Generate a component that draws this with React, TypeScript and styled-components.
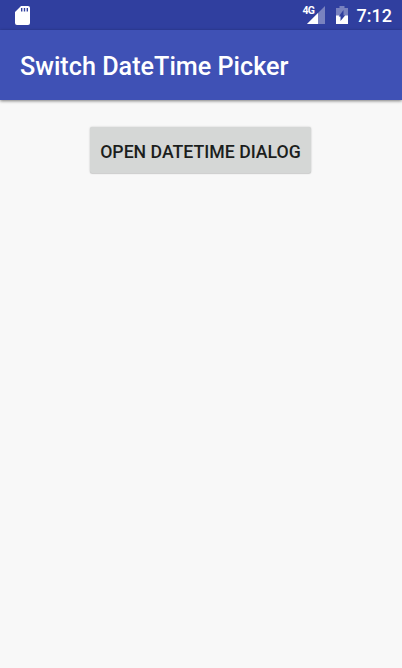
import React from 'react';
import styled, { createGlobalStyle } from 'styled-components';

const Global = createGlobalStyle`
  * { box-sizing: border-box; }
  body { margin: 0; background: #f8f8f8; font-family: Roboto, sans-serif; }
`;
const Screen = styled.div`
  display: flex; flex-direction: column; width: 402px; height: 668px; overflow: hidden; background: #f8f8f8;
`;
const StatusBar = styled.header`
  display: flex; align-items: center; justify-content: space-between;
  height: 30px; flex: none; padding: 0 10px 0 15px; background: #303f9f; color: #fff;
`;
const StatusGroup = styled.div`
  display: flex; align-items: center;
`;
const Clock = styled.span`
  margin-left: 9px; padding-top: 2px; font-size: 18px; font-weight: 500; line-height: 30px;
`;
const Network = styled.div`
  position: relative; display: flex; width: 18px; height: 18px;
`;
const NetworkLabel = styled.span`
  position: absolute; left: -4px; top: -1px;
  font-size: 10.5px; font-weight: 700; line-height: 11px; letter-spacing: -0.9px;
`;
const BatteryIcon = styled.svg`
  margin-left: 11px;
`;
const CardIcon = styled.svg`
  margin-top: 1px;
`;
const AppBar = styled.div`
  display: flex; align-items: center; height: 70px; flex: none; padding: 3px 20px 0;
  background: #3f51b5; color: #fff; box-shadow: 0 1px 3px rgba(0,0,0,.5);
`;
const Title = styled.h1`
  margin: 0; font-size: 25.2px; font-weight: 500; line-height: 30px; white-space: nowrap;
`;
const Content = styled.main`
  display: flex; justify-content: center; align-items: flex-start; padding: 27px 1px 0 0;
`;
const DialogButton = styled.button`
  width: 221px; height: 46px; padding: 3px 0 0; border: 0; border-radius: 2px; background: #d5d7d6;
  color: #1c1e1d; font: 500 17.7px/20px Roboto, sans-serif; white-space: nowrap;
  box-shadow: 0 0 2px rgba(0,0,0,.22), 0 1px 1px rgba(0,0,0,.12);
`;

export default function App() {
  return (
    <Screen>
      <Global />
      <StatusBar>
        <CardIcon width="15" height="19" viewBox="0 0 15 19" aria-label="SD card">
          <path fill="#fff" fillRule="evenodd" d="M6 0h7a2 2 0 0 1 2 2v15a2 2 0 0 1-2 2H2a2 2 0 0 1-2-2V6zM6 2v3.5h1.4V2zM8.8 2v3.5h1.4V2zM11.6 2v3.5H13V2z" />
        </CardIcon>
        <StatusGroup>
          <Network>
            <svg width="18" height="18" viewBox="0 0 18 18" aria-label="Signal">
              <path fill="#7982bf" d="M18 0v18H0L11 7z" />
              <path fill="#fff" d="M11 7v11H0z" />
            </svg>
            <NetworkLabel>4G</NetworkLabel>
          </Network>
          <BatteryIcon width="12" height="18" viewBox="0 0 12 18" aria-label="Battery charging">
            <path fill="#7982bf" d="M3.5 0h5v2H12v8H0V2h3.5z" />
            <path fill="#fff" d="M0 9.5h12V18H0z" />
            <path fill="#303f9f" d="M7.5 4v5.3h1.8L4.5 15v-4.5H2.7z" />
          </BatteryIcon>
          <Clock>7:12</Clock>
        </StatusGroup>
      </StatusBar>
      <AppBar><Title>Switch DateTime Picker</Title></AppBar>
      <Content><DialogButton type="button">OPEN DATETIME DIALOG</DialogButton></Content>
    </Screen>
  );
}
